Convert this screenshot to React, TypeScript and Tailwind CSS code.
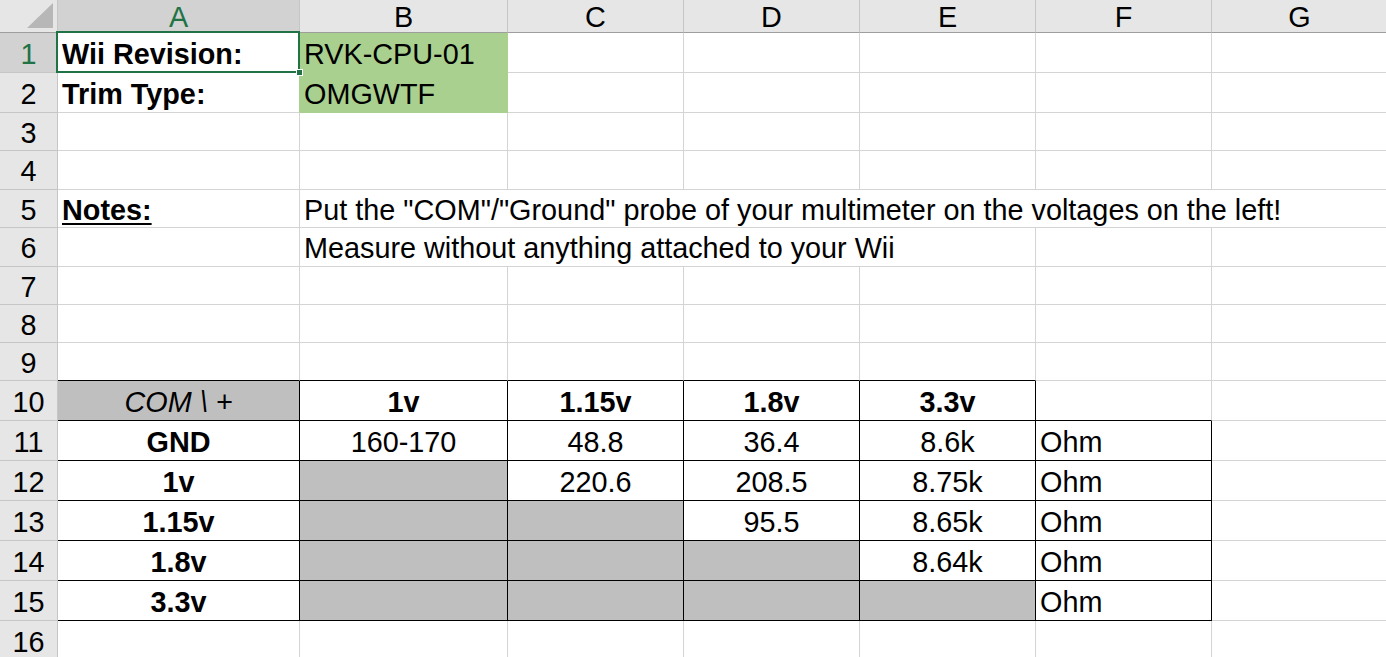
type Cell = {
  t?: string;
  bold?: boolean;
  italic?: boolean;
  under?: boolean;
  center?: boolean;
  fill?: 'green' | 'gray';
  rb?: boolean;
  bb?: boolean;
  rg?: boolean;
  span?: string;
};

type Row = { n: number; h: string; cells: Cell[] };

const COLS = 'grid grid-cols-[58px_242px_208px_176px_176px_176px_176px_176px]';

const blank = (n: number): Cell[] => Array.from({ length: n }, () => ({}));

const rows: Row[] = [
  {
    n: 1,
    h: 'h-[40px]',
    cells: [
      { t: 'Wii Revision:', bold: true, rg: true },
      { t: 'RVK-CPU-01', fill: 'green' },
      ...blank(5),
    ],
  },
  {
    n: 2,
    h: 'h-[40px]',
    cells: [
      { t: 'Trim Type:', bold: true, rg: true },
      { t: 'OMGWTF', fill: 'green' },
      ...blank(5),
    ],
  },
  { n: 3, h: 'h-[38px]', cells: blank(7) },
  { n: 4, h: 'h-[39px]', cells: blank(7) },
  {
    n: 5,
    h: 'h-[38px]',
    cells: [
      { t: 'Notes:', bold: true, under: true },
      {
        t: 'Put the "COM"/"Ground" probe of your multimeter on the voltages on the left!',
        span: 'col-span-6',
      },
    ],
  },
  {
    n: 6,
    h: 'h-[39px]',
    cells: [{}, { t: 'Measure without anything attached to your Wii', span: 'col-span-4' }, {}, {}],
  },
  { n: 7, h: 'h-[38px]', cells: blank(7) },
  { n: 8, h: 'h-[38px]', cells: blank(7) },
  {
    n: 9,
    h: 'h-[38px]',
    cells: [{ bb: true }, { bb: true }, { bb: true }, { bb: true }, { bb: true }, {}, {}],
  },
  {
    n: 10,
    h: 'h-[40px]',
    cells: [
      { t: 'COM \\ +', italic: true, center: true, fill: 'gray', rb: true, bb: true },
      { t: '1v', bold: true, center: true, rb: true, bb: true },
      { t: '1.15v', bold: true, center: true, rb: true, bb: true },
      { t: '1.8v', bold: true, center: true, rb: true, bb: true },
      { t: '3.3v', bold: true, center: true, rb: true, bb: true },
      { bb: true },
      {},
    ],
  },
];

// resistance readings, grey where the pair repeats
const table: string[][] = [
  ['GND', '160-170', '48.8', '36.4', '8.6k'],
  ['1v', '', '220.6', '208.5', '8.75k'],
  ['1.15v', '', '', '95.5', '8.65k'],
  ['1.8v', '', '', '', '8.64k'],
  ['3.3v', '', '', '', ''],
];

table.forEach((vals, r) => {
  const n = 11 + r;
  const cells: Cell[] = vals.map((v, c) => {
    if (c === 0) return { t: v, bold: true, center: true, rb: true, bb: true };
    return c <= r
      ? { fill: 'gray', rb: true, bb: true }
      : { t: v, center: true, rb: true, bb: true };
  });
  cells.push({ t: 'Ohm', rb: true, bb: true });
  cells.push({});
  rows.push({ n, h: 'h-[40px]', cells });
});

rows.push({ n: 16, h: 'h-[40px]', cells: blank(7) });

function CellBox({ c }: { c: Cell }) {
  const right = c.rb
    ? 'border-r-black'
    : c.rg || c.fill === 'green'
      ? 'border-r-[#a9d08e]'
      : 'border-r-[#d4d4d4]';
  const bottom = c.bb
    ? 'border-b-black'
    : c.fill === 'green'
      ? 'border-b-[#a9d08e]'
      : 'border-b-[#d4d4d4]';
  const bg = c.fill === 'green' ? 'bg-[#a9d08e]' : c.fill === 'gray' ? 'bg-[#bfbfbf]' : 'bg-white';
  return (
    <div
      className={[
        'flex items-center overflow-visible whitespace-nowrap border-r border-b leading-none pt-[3px]',
        right,
        bottom,
        bg,
        c.span ?? '',
        c.center ? 'justify-center' : 'justify-start pl-[4px]',
        c.bold ? 'font-bold' : '',
        c.italic ? 'italic' : '',
      ].join(' ')}
    >
      {c.t && <span className={c.under ? 'underline decoration-2 underline-offset-[3px]' : ''}>{c.t}</span>}
    </div>
  );
}

function RowHead({ n }: { n: number }) {
  return (
    <div
      className={
        n === 1
          ? 'flex items-center justify-center pt-[3px] border-r border-b border-r-[#c6c6c6] border-b-[#c6c6c6] bg-[#d2d2d2] text-[#217346] leading-none'
          : 'flex items-center justify-center pt-[3px] border-r border-b border-r-[#c6c6c6] border-b-[#c6c6c6] bg-[#e6e6e6] text-black leading-none'
      }
    >
      {n}
    </div>
  );
}

export default function App() {
  const letters = ['A', 'B', 'C', 'D', 'E', 'F', 'G'];
  return (
    <div className="relative w-[1386px] h-[657px] overflow-hidden bg-white font-['Liberation_Sans',Arial,sans-serif] text-[28.8px] text-black">
      <div className={`${COLS} h-[33px]`}>
        <div className="relative border-r border-b border-r-[#c6c6c6] border-b-[#9e9e9e] bg-[#e6e6e6]">
          <svg className="absolute left-0 top-0" width="57" height="32" viewBox="0 0 57 32">
            <polygon points="53,3 53,28 27,28" fill="#b7b7b7" />
          </svg>
        </div>
        {letters.map((l) => (
          <div
            key={l}
            className={
              l === 'A'
                ? 'flex items-center justify-center pt-[2px] border-r border-b border-r-[#c6c6c6] border-b-[#9e9e9e] bg-[#d2d2d2] text-[#217346] leading-none'
                : 'flex items-center justify-center pt-[2px] border-r border-b border-r-[#c6c6c6] border-b-[#9e9e9e] bg-[#e6e6e6] leading-none'
            }
          >
            {l}
          </div>
        ))}
      </div>

      {rows.map((r) => (
        <div key={r.n} className={`${COLS} ${r.h}`}>
          <RowHead n={r.n} />
          {r.cells.map((c, i) => (
            <CellBox key={i} c={c} />
          ))}
        </div>
      ))}

      {/* active cell A1 */}
      <div className="absolute left-[56px] top-[31px] w-[244px] h-[42px] border-2 border-[#217346] pointer-events-none" />
      <div className="absolute left-[296px] top-[69px] w-[7px] h-[7px] bg-[#217346] border border-white pointer-events-none" />
    </div>
  );
}
